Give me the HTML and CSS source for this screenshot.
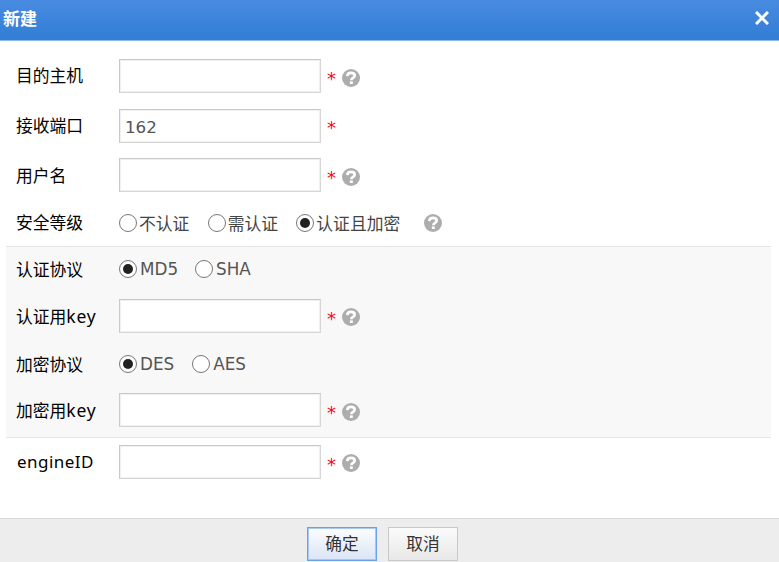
FILE: index.html
```html
<!DOCTYPE html>
<html lang="zh-CN">
<head>
<meta charset="utf-8">
<title>新建</title>
<link rel="stylesheet" href="styles.css">
</head>
<body>
<svg class="defs" width="0" height="0">
  <symbol id="help" viewBox="0 0 18 18">
    <circle cx="9" cy="9" r="9" fill="#adadad"/>
    <path d="M5.3 7.1C5.4 4.8 6.8 3.9 9 3.9C11.2 3.9 12.7 4.9 12.7 6.7C12.7 8.9 9.4 8.8 9.3 11.2" fill="none" stroke="#fff" stroke-width="2.6"/>
    <rect x="7.9" y="12.4" width="2.9" height="2.6" fill="#fff"/>
  </symbol>
</svg>
<div class="dialog">
  <header class="titlebar">
    <h1>新建</h1>
    <svg class="close" width="14" height="14" viewBox="0 0 14 14"><path d="M1 1L13 13M13 1L1 13" stroke="#fff" stroke-width="3"/></svg>
  </header>
  <form class="form">
    <div class="row host"><label>目的主机</label><input type="text"><span class="star">*</span><svg class="help"><use href="#help"/></svg></div>
    <div class="row port"><label>接收端口</label><input type="text" value="162"><span class="star">*</span></div>
    <div class="row user"><label>用户名</label><input type="text"><span class="star">*</span><svg class="help"><use href="#help"/></svg></div>
    <div class="row level"><label>安全等级</label>
      <span class="option"><i class="radio"></i>不认证</span>
      <span class="option"><i class="radio"></i>需认证</span>
      <span class="option"><i class="radio on"></i>认证且加密</span>
      <svg class="help"><use href="#help"/></svg>
    </div>
    <div class="section">
      <div class="row auth"><label>认证协议</label>
        <span class="option latin"><i class="radio on"></i>MD5</span>
        <span class="option latin"><i class="radio"></i>SHA</span>
      </div>
      <div class="row authkey"><label>认证用<span class="key">key</span></label><input type="text"><span class="star">*</span><svg class="help"><use href="#help"/></svg></div>
      <div class="row enc"><label>加密协议</label>
        <span class="option latin"><i class="radio on"></i>DES</span>
        <span class="option latin"><i class="radio"></i>AES</span>
      </div>
      <div class="row enckey"><label>加密用<span class="key">key</span></label><input type="text"><span class="star">*</span><svg class="help"><use href="#help"/></svg></div>
    </div>
    <div class="row engine"><label class="engine-label">engineID</label><input type="text"><span class="star">*</span><svg class="help"><use href="#help"/></svg></div>
  </form>
  <footer class="actions">
    <button class="primary" type="button">确定</button>
    <button type="button">取消</button>
  </footer>
</div>
</body>
</html>
```
FILE: styles.css
```css
* { box-sizing: border-box; }
body {
  margin: 0;
  background: #fff;
  overflow: hidden;
  font: 16.7px/20px "DejaVu Sans", "Noto Sans CJK SC", sans-serif;
  color: #000;
}
.defs { display: block; }
.dialog { display: flex; flex-direction: column; height: 562px; }
.titlebar {
  flex: none;
  display: flex;
  align-items: center;
  justify-content: space-between;
  height: 41px;
  padding: 0 10px 4px 3px;
  background: linear-gradient(#488be1, #327dd5);
  border-bottom: 1px solid #8db7e8;
}
h1 { margin: 0; padding-bottom: 1px; font: bold 17px/20px "Noto Sans CJK SC", sans-serif; color: #fff; }
.close { display: block; }
.form { flex: 1; padding: 10px 8px 0 6px; }
.row { display: flex; align-items: center; height: 50px; padding-left: 10px; }
.row label {
  width: 103px;
  flex: none;
  padding-bottom: 1px;
  white-space: nowrap;
  font: 16.8px/20px "Noto Sans CJK SC", sans-serif;
}
.host label, .port label { padding-bottom: 3px; }
.authkey label, .enckey label { padding-bottom: 0; }
.row .key { font: 17.5px/20px "Noto Sans", sans-serif; letter-spacing: .8px; }
.row .engine-label { padding: 0 0 0 1px; font: 17px/20px "Noto Sans", sans-serif; letter-spacing: .45px; }
.row input {
  width: 202px;
  height: 34px;
  margin: 0 1px 0 0;
  padding: 2px 5px 0;
  border: 1px solid #d6d6d6;
  border-top-color: #c9c9c9;
  border-left-color: #c9c9c9;
  border-radius: 0;
  box-shadow: inset 0 0 0 1px #f0f0f0;
  background: #fff;
  color: #555;
  font: 16.7px "DejaVu Sans", sans-serif;
}
.star { width: 10px; margin: 6px 5px 0 5px; color: #ff0026; font-size: 18px; }
.help { display: block; flex: none; width: 18px; height: 18px; margin-top: 3px; }
.port .star { margin-top: 4px; }
.user { height: 48px; }
.level { height: 47px; }
.level .help { margin-left: 5.5px; margin-top: 0; }
.option { display: flex; align-items: center; margin-right: 18.3px; color: #444; font: 16.8px/20px "Noto Sans CJK SC", sans-serif; }
.latin { margin-right: 17px; color: #555; font: 16.8px/20px "DejaVu Sans", sans-serif; }
.radio {
  display: grid;
  place-items: center;
  width: 18px;
  height: 18px;
  margin-right: 2px;
  border: 1.5px solid #777;
  border-radius: 50%;
  background: #fff;
}
.latin .radio { margin-right: 3px; }
.radio.on::after { content: ""; width: 10px; height: 10px; border-radius: 50%; background: #222; }
.section {
  height: 192px;
  background: #f8f8f8;
  border-top: 1px solid #e6e6e6;
  border-bottom: 1px solid #e6e6e6;
}
.auth { height: 44px; }
.authkey .help { margin-top: 1px; }
.enc, .enckey { height: 46px; }
.enc .latin + .latin { margin-left: 1px; }
.engine { height: 48px; }
.engine .help { margin-top: 1px; }
.actions {
  flex: none;
  display: flex;
  justify-content: center;
  gap: 11px;
  height: 44px;
  padding: 8px 14px 0 0;
  background: #ededed;
  border-top: 1px solid #dadada;
}
button {
  width: 70px;
  height: 34px;
  padding: 0 0 2px 0;
  border: 1px solid #c8c8c8;
  background: linear-gradient(#fbfbfb, #e8e8e8);
  color: #333;
  font: 16.7px/20px "Noto Sans CJK SC", sans-serif;
}
.primary { border: 1px solid #6ba1e8; box-shadow: inset 0 0 0 1px #a9c8f1; background: linear-gradient(#fcfdff, #dae5f6); }
```
